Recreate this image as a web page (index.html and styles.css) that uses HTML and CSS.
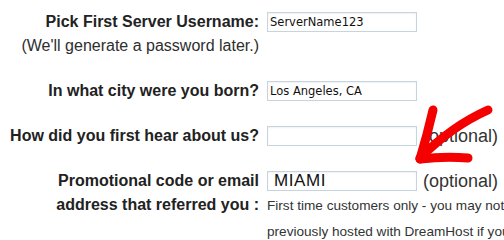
FILE: index.html
```html
<!DOCTYPE html>
<html lang="en">
<head>
    <meta charset="UTF-8">
    <title>Sign Up</title>
    <link rel="stylesheet" href="styles.css">
</head>
<body>
    <div class="signup-form">
        <div class="form-row first">
            <div class="label">
                <b>Pick First Server Username:</b><br>
                (We'll generate a password later.)
            </div>
            <div class="field">
                <input class="text-input" type="text" value="ServerName123">
            </div>
        </div>

        <div class="form-row">
            <div class="label"><b>In what city were you born?</b></div>
            <div class="field">
                <input class="text-input" type="text" value="Los Angeles, CA">
            </div>
        </div>

        <div class="form-row">
            <div class="label"><b>How did you first hear about us?</b></div>
            <div class="field">
                <input class="text-input" type="text" value="">
                <span class="optional">(optional)</span>
            </div>
        </div>

        <div class="form-row">
            <div class="label">
                <b>Promotional code or email<br>address that referred you :</b>
            </div>
            <div class="field stacked">
                <div class="field-line">
                    <input class="text-input promo" type="text" value="MIAMI">
                    <span class="optional">(optional)</span>
                </div>
                <div class="hint">
                    First time customers only - you may not<br>
                    previously hosted with DreamHost if you
                </div>
            </div>
        </div>
    </div>

    <!-- red marker arrow drawn over the form -->
    <svg class="marker" width="504" height="240" viewBox="0 0 504 240">
        <g fill="none" stroke="#f40000" stroke-width="9" stroke-linecap="round" stroke-linejoin="round">
            <path d="M488 110 Q452 126 420 158"/>
            <path d="M433 110 Q427 136 420 159"/>
            <path d="M420 159 Q445 156 468 158"/>
        </g>
    </svg>
</body>
</html>
```

FILE: styles.css
```css
html, body {
    margin: 0;
    overflow: hidden;
}

body {
    width: 504px;
    height: 240px;
    position: relative;
    background: #fff;
    font-family: "Liberation Sans", Arial, sans-serif;
    font-size: 16px;
    color: #2e2e2e;
}

.signup-form {
    padding-top: 10px;
}

.form-row {
    display: flex;
    align-items: flex-start;
    margin-bottom: 21px;
}

.form-row:last-child {
    margin-bottom: 0;
}

.label {
    width: 259px;
    flex: none;
    text-align: right;
    line-height: 24px;
}

.label b {
    color: #222;
}

.field {
    margin-left: 8px;
    display: flex;
    align-items: center;
    height: 24px;
    white-space: nowrap;
}

.field.stacked {
    display: block;
    height: auto;
}

.field-line {
    display: flex;
    align-items: center;
    height: 24px;
}

.text-input {
    box-sizing: border-box;
    width: 150px;
    height: 20px;
    margin: 0;
    padding: 0 2px;
    border: 1px solid #c6d4de;
    box-shadow: inset 0 1px 2px rgba(0,0,0,0.06);
    background: #fff;
    font-family: "DejaVu Sans", sans-serif;
    font-size: 11.5px;
    color: #111;
    outline: none;
}

.text-input.promo {
    padding-left: 6px;
    font-family: "Liberation Sans", Arial, sans-serif;
    font-size: 17px;
    letter-spacing: 0.6px;
}

.optional {
    margin-left: 6px;
    font-size: 18px;
    color: #333;
}

.hint {
    font-size: 13.6px;
    line-height: 26px;
    color: #333;
}

.marker {
    position: absolute;
    left: 0;
    top: 0;
    pointer-events: none;
}
```
